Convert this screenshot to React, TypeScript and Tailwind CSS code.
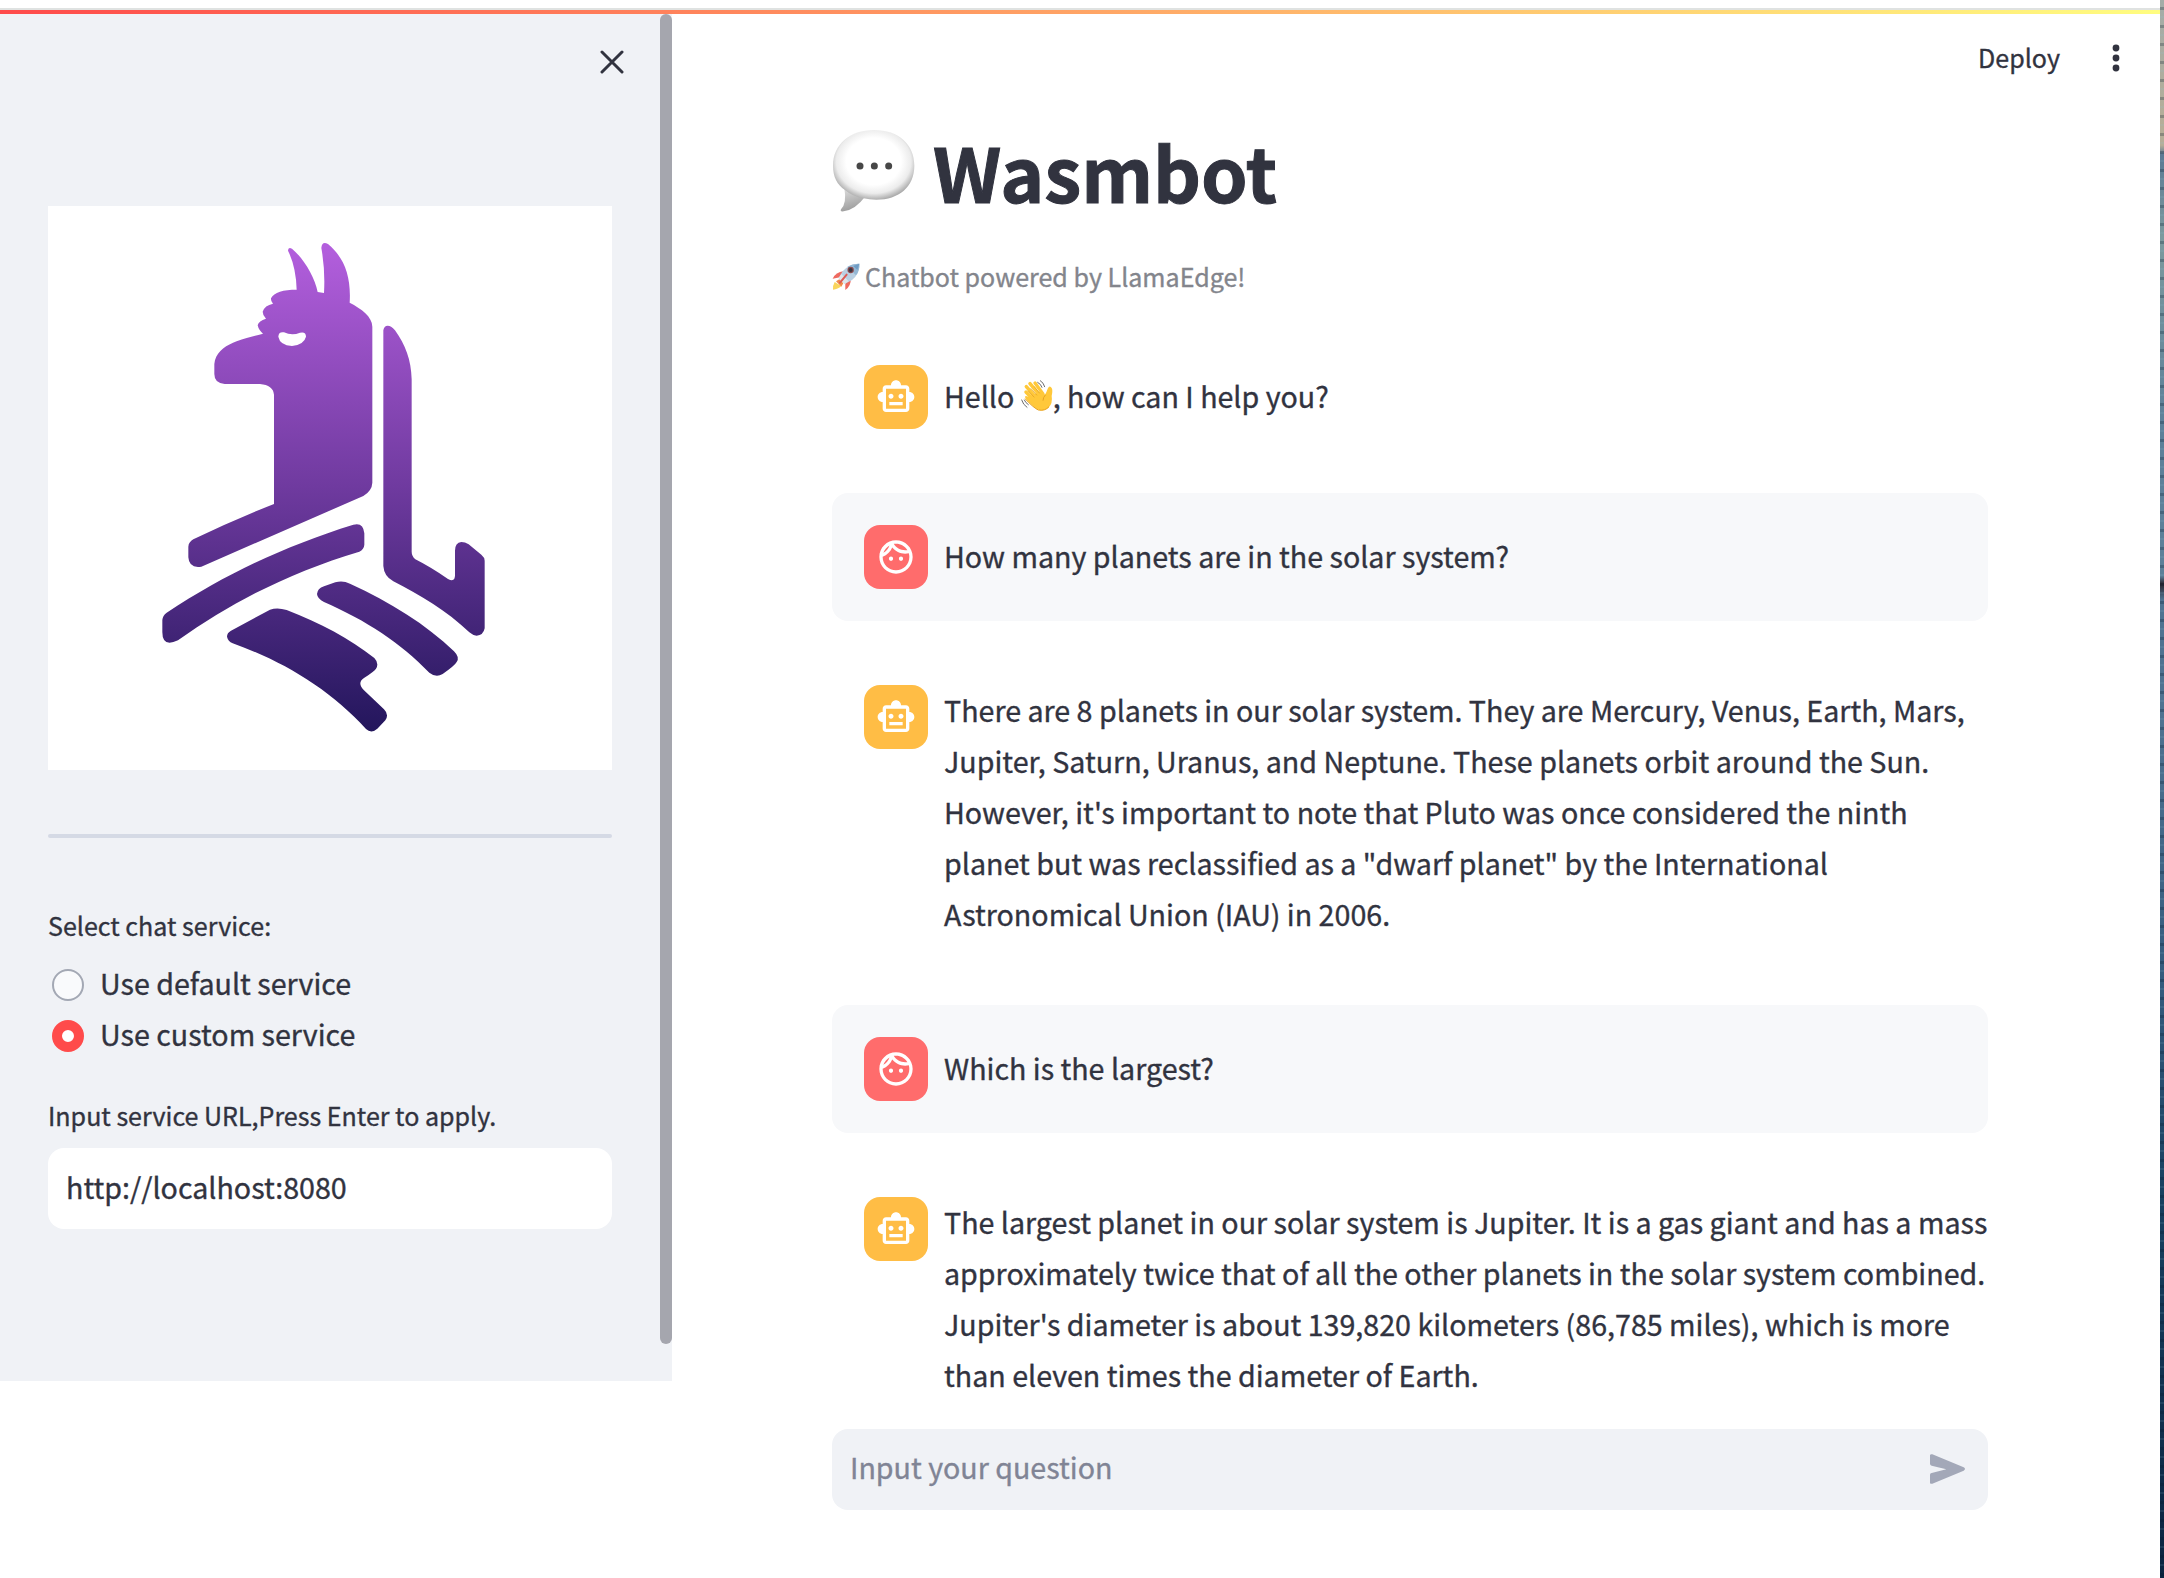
import React, { type ReactNode } from 'react';

const FONT = "font-['Noto_Sans_CJK_SC','Noto_Sans',sans-serif]";

function Llama() {
  return (
    <svg viewBox="0 0 1692 1692" className="size-[564px]" role="img" aria-label="LlamaEdge">
      <defs>
        <linearGradient id="llama" gradientUnits="userSpaceOnUse" x1="0" y1="68" x2="0" y2="1535">
          <stop offset="0" stopColor="#b45fde" />
          <stop offset="0.5" stopColor="#6f3a9f" />
          <stop offset="1" stopColor="#23165c" />
        </linearGradient>
      </defs>
      <g transform="translate(276 42)" fill="url(#llama)">
        <path fillRule="evenodd" d="M402 852V524Q399 495 360 492H254Q223 490 223 462V432C226 400 250 380 279 368Q300 358 369 341Q356 330 353 316Q356 302 378 296Q368 286 368 275Q374 256 399 251Q392 244 393 235C402 216 430 209 470 209Q468 140 444 92Q444 80 456 86C490 114 524 170 533 216L552 219Q556 150 544 84Q546 62 564 72C612 112 634 168 629 248C664 266 697 290 697 320V788Q696 812 670 828L184 1040Q147 1046 145 1012V980Q146 966 160 958Q280 900 402 852ZM415 350Q416 334 432 337Q456 348 480 338Q498 334 498 350Q492 374 456 378Q420 376 415 350Z" />
        <path d="M730 331Q732 317 743 317Q755 317 765 331C796 374 814 420 815 478V995Q815 1008 826 1018Q870 1040 924 1077Q945 1088 945 1066V992Q945 968 964 966Q975 966 986 973L1024 1004Q1034 1012 1034 1022V1225Q1030 1246 1010 1247Q998 1246 988 1237C920 1172 840 1126 760 1084Q732 1069 730 1038Z" />
        <path d="M640 914Q670 906 673 940V974Q672 988 658 995C460 1054 280 1142 114 1261Q66 1284 67 1234V1200Q68 1186 80 1178C260 1060 440 976 640 914Z" />
        <path d="M552 1099L586 1087Q608 1080 630 1091C750 1146 860 1214 942 1294Q960 1312 950 1326Q945 1336 908 1362Q888 1374 868 1358C780 1268 680 1202 552 1146Q532 1136 531 1122Q532 1106 552 1099Z" />
        <path d="M273 1232L390 1169Q412 1161 440 1170C540 1209 630 1256 703 1314Q718 1330 708 1346Q704 1353 672 1374Q650 1388 672 1411L732 1468Q748 1484 736 1501L712 1526Q694 1542 678 1527C570 1408 430 1324 278 1270Q264 1264 261 1250Q261 1238 273 1232Z" />
      </g>
    </svg>
  );
}

function BotAvatar() {
  return (
    <div className="flex size-16 shrink-0 items-center justify-center rounded-2xl bg-[#ffbd45]">
      <svg viewBox="0 0 24 24" className="size-10" fill="#fff">
        <path d="M20 9V7c0-1.100-.9-2-2-2h-3c0-1.660-1.340-3-3-3S9 3.340 9 5H6c-1.100 0-2 .9-2 2v2c-1.660 0-3 1.340-3 3s1.340 3 3 3v4c0 1.100.9 2 2 2h12c1.100 0 2-.9 2-2v-4c1.660 0 3-1.340 3-3s-1.340-3-3-3zm-2 10H6V7h12v12zm-9-6c-.83 0-1.500-.67-1.500-1.500S8.170 10 9 10s1.500.67 1.500 1.500S9.830 13 9 13zm7.500-1.500c0 .83-.67 1.500-1.500 1.500s-1.500-.67-1.500-1.500.67-1.500 1.500-1.500 1.500.67 1.500 1.500zM8 15h8v2H8v-2z" />
      </svg>
    </div>
  );
}

function UserAvatar() {
  return (
    <div className="flex size-16 shrink-0 items-center justify-center rounded-2xl bg-[#ff6c6c]">
      <svg viewBox="0 0 24 24" className="size-10" fill="#fff">
        <path d="M10.250 13c0 .69-.56 1.250-1.250 1.250S7.750 13.690 7.750 13s.56-1.250 1.250-1.250 1.250.56 1.250 1.250zM15 11.750c-.69 0-1.250.56-1.250 1.250s.56 1.250 1.250 1.250 1.250-.56 1.250-1.250-.56-1.250-1.250-1.250zm7 .25c0 5.520-4.480 10-10 10S2 17.520 2 12 6.480 2 12 2s10 4.480 10 10zM10.660 4.120C12.060 6.440 14.600 8 17.500 8c.46 0 .91-.05 1.340-.12C17.440 5.560 14.900 4 12 4c-.46 0-.91.05-1.340.12zM4.420 9.470c1.710-.97 3.030-2.550 3.660-4.440C6.370 6 5.050 7.580 4.420 9.470zM20 12c0-.78-.12-1.530-.33-2.240-.7.15-1.420.24-2.170.24-3.130 0-5.920-1.440-7.760-3.690C8.690 8.870 6.600 10.880 4 11.860c.01.04 0 .09 0 .14 0 4.410 3.590 8 8 8s8-3.590 8-8z" />
      </svg>
    </div>
  );
}

function SpeechBalloon() {
  return (
    <svg viewBox="0 0 246 246" className="size-[82px] shrink-0">
      <defs>
        <radialGradient id="balloon" cx="0.5" cy="0.45" r="0.56">
          <stop offset="0.6" stopColor="#fff" />
          <stop offset="0.82" stopColor="#ececec" />
          <stop offset="1" stopColor="#a9a9a9" />
        </radialGradient>
        <linearGradient id="tail" x1="0" y1="0" x2="0.3" y2="1">
          <stop offset="0.2" stopColor="#d2d2d2" />
          <stop offset="1" stopColor="#9d9d9d" />
        </linearGradient>
      </defs>
      <path d="M34 174Q42 220 24 238Q20 246 32 244Q68 238 96 200Z" fill="url(#tail)" />
      <path d="M123 0C198 0 244 44 244 107C244 170 198 209 130 209Q108 209 92 205Q60 200 36 180C12 164 0 140 0 107C0 44 50 0 123 0Z" fill="url(#balloon)" />
      <circle cx="81" cy="108" r="10.500" fill="#474747" />
      <circle cx="124" cy="108" r="10.500" fill="#474747" />
      <circle cx="167" cy="108" r="10.500" fill="#474747" />
    </svg>
  );
}

function Rocket() {
  return (
    <svg viewBox="0 0 84 82" className="h-[28px] w-[28px] shrink-0">
      <path d="M8 56Q2 66 3 79Q18 78 28 68Z" fill="#f9d55c" />
      <path d="M12 54L28 70L34 60L22 48Z" fill="#f08a4b" />
      <path d="M34 24Q12 26 2 46L24 42Z" fill="#ee6a60" />
      <path d="M56 46Q58 66 40 80L40 56Z" fill="#ee6a60" />
      <path d="M82 1Q84 30 60 50L38 62L20 44L32 24Q52 0 82 1Z" fill="#b9cfe2" />
      <path d="M82 1Q84 20 72 36L46 10Q62 0 82 1Z" fill="#94b7d4" />
      <path d="M64 8L76 20L82 1Z" fill="#6f9cc4" />
      <path d="M38 62L20 44L28 32L50 54Z" fill="#dfe5ea" />
      <circle cx="56" cy="20" r="9.500" fill="#8a4a4e" />
      <circle cx="56" cy="20" r="6" fill="#3a3640" />
      <path d="M24 58L44 34" stroke="#dd5a55" strokeWidth="6" strokeLinecap="round" />
    </svg>
  );
}

function Wave() {
  return (
    <svg viewBox="0 0 96 96" className="mx-0 inline-block size-8 align-[-4px]">
      <g stroke="#ffc83a" strokeLinecap="round" fill="none">
        <path d="M15 36L44 66" strokeWidth="10.500" />
        <path d="M16 20L50 58" strokeWidth="10.500" />
        <path d="M27 11L58 48" strokeWidth="10.500" />
        <path d="M42 9L66 42" strokeWidth="10" />
      </g>
      <path d="M22 50L60 34L72 44Q76 38 80 26Q86 14 92 24Q96 30 92 48Q96 70 82 84Q66 96 48 88Q38 82 14 56Q8 44 22 50Z" fill="#ffc83a" />
      <path d="M74 44Q66 52 66 62" stroke="#e09a1e" strokeWidth="2.500" fill="none" />
      <path d="M21 32L40 52M29 25L48 46M39 19L56 40" stroke="#e2a022" strokeWidth="2.200" fill="none" />
      <path d="M12 56Q38 84 52 90Q72 94 84 80" stroke="#e9a11e" strokeWidth="3" fill="none" />
      <g stroke="#555" strokeWidth="2.600" strokeLinecap="round" fill="none">
        <path d="M58 2Q68 8 71 20M50 7Q60 12 63 22M2 60Q6 74 18 82M10 60Q13 68 22 74" />
      </g>
    </svg>
  );
}

function Message({ user, children }: { user?: boolean; children: ReactNode }) {
  return (
    <div className={user ? 'flex gap-4 rounded-2xl bg-[#f7f8fa] py-8 pl-8' : 'flex gap-4 py-8 pl-8'}>
      {user ? <UserAvatar /> : <BotAvatar />}
      <div className="-mt-[1.5px] mb-[1.5px] self-center text-[28.640px] leading-[51.2px] whitespace-nowrap">{children}</div>
    </div>
  );
}

function Line({ children }: { children: ReactNode }) {
  return (
    <div>
      <span>{children}</span>
    </div>
  );
}

export default function App() {
  return (
    <div className={`flex h-[1578px] w-[2164px] overflow-hidden bg-white text-[#31333f] [-webkit-text-stroke:0.35px] ${FONT}`}>
      <div className="flex w-[2160px] flex-col">
        <div className="h-2 shrink-0" />
        <div className="h-0.5 shrink-0 bg-[#dfe2e1]" />
        <div className="h-1 shrink-0 bg-[linear-gradient(90deg,#ff4b4b,#fffd80)]" />
        <div className="flex grow">
          <aside className="flex h-[1367px] w-[672px] bg-[#f0f2f6]">
            <div className="flex w-[660px] flex-col pr-12 pl-12">
              <div className="-mr-3 flex h-[192px] justify-end pt-[36px]">
                <svg viewBox="0 0 24 24" className="size-6" stroke="#31333f" strokeWidth="3" strokeLinecap="round">
                  <path d="M2 2L22 22M22 2L2 22" />
                </svg>
              </div>
              <div className="size-[564px] bg-white">
                <Llama />
              </div>
              <div className="mt-16 h-1 shrink-0 rounded-full bg-[#d5dae5]" />
              <div className="mt-[65px] h-[45px] text-[25.060px] leading-[45px]">
                <span>Select chat service:</span>
              </div>
              <div className="mt-[11px] flex h-[52px] items-center gap-4 pl-1 text-[28.640px]">
                <div className="size-8 rounded-full border-2 border-[#a3a8b4] bg-[#f9fafc]" />
                <span className="pb-[3px]">Use default service</span>
              </div>
              <div className="flex h-[50px] items-center gap-4 pl-1 text-[28.640px]">
                <div className="size-8 rounded-full border-[10px] border-[#ff4b4b] bg-white" />
                <span className="pb-[3px]">Use custom service</span>
              </div>
              <div className="mt-8 h-[45px] text-[25.060px] leading-[45px]">
                <span>Input service URL,Press Enter to apply.</span>
              </div>
              <div className="mt-2.5 flex h-[81px] items-center rounded-2xl bg-white px-[18px] text-[28.640px]">
                <span className="pb-[3px]">http://localhost:8080</span>
              </div>
            </div>
            <div className="h-[1330px] w-3 rounded-full bg-[#a5a6ae]" />
          </aside>
          <main className="flex grow flex-col">
            <header className="flex h-[88px] items-center justify-end gap-[51px] pr-[39px] text-[25.060px]">
              <span>Deploy</span>
              <svg viewBox="0 0 10 28" className="h-7 w-2.5" fill="#31333f">
                <circle cx="5" cy="4" r="3.400" />
                <circle cx="5" cy="14" r="3.400" />
                <circle cx="5" cy="24" r="3.400" />
              </svg>
            </header>
            <div className="ml-[160px] flex w-[1156px] flex-col">
              <h1 className="flex h-[138px] items-center gap-[18px] pl-px text-[74.600px] leading-[106px] font-bold [-webkit-text-stroke:1px]">
                <SpeechBalloon />
                <span className="pb-[2px]">Wasmbot</span>
              </h1>
              <p className="flex h-[74px] items-center gap-[5px] text-[25.060px] text-[#83858c]">
                <Rocket />
                <span>Chatbot powered by LlamaEdge!</span>
              </p>
              <div className="mt-[19px] flex flex-col gap-8">
                <Message>
                  <Line>
                    Hello <Wave />, how can I help you?
                  </Line>
                </Message>
                <Message user>
                  <Line>How many planets are in the solar system?</Line>
                </Message>
                <Message>
                  <Line>There are 8 planets in our solar system. They are Mercury, Venus, Earth, Mars,</Line>
                  <Line>Jupiter, Saturn, Uranus, and Neptune. These planets orbit around the Sun.</Line>
                  <Line>However, it's important to note that Pluto was once considered the ninth</Line>
                  <Line>planet but was reclassified as a "dwarf planet" by the International</Line>
                  <Line>Astronomical Union (IAU) in 2006.</Line>
                </Message>
                <Message user>
                  <Line>Which is the largest?</Line>
                </Message>
                <Message>
                  <Line>The largest planet in our solar system is Jupiter. It is a gas giant and has a mass</Line>
                  <Line>approximately twice that of all the other planets in the solar system combined.</Line>
                  <Line>Jupiter's diameter is about 139,820 kilometers (86,785 miles), which is more</Line>
                  <Line>than eleven times the diameter of Earth.</Line>
                </Message>
              </div>
              <div className="-mt-[5px] flex h-[81px] items-center justify-between rounded-2xl bg-[#f0f2f6] pr-[23px] pl-[18px] text-[28.640px] text-[#808495]">
                <span className="pb-[3px]">Input your question</span>
                <svg viewBox="0 0 105 90" className="h-[30px] w-[35px]" fill="#a3a8b8">
                  <path d="M0 4Q1 -1 7 1L101 40Q109 45 101 50L7 89Q1 91 0 86V62Q0 58 5 57L49 46L5 35Q0 33 0 29Z" />
                </svg>
              </div>
            </div>
          </main>
        </div>
      </div>
      <div className="w-1 bg-[repeating-linear-gradient(180deg,transparent_0_7px,#00142840_7px_10px,transparent_10px_16px,#8fc0d820_16px_18px),linear-gradient(180deg,#a3aca8,#b5ae98_8%,#b5ae98_9.200%,#5b7a94_9.800%,#7c9a9e_15%,#5c8099_27%,#5c8099_36.500%,#2a2530_37%,#4f7391_38%,#4f7391_45%,#335a7c_63%,#17405f_76%,#0a2440)]" />
    </div>
  );
}
